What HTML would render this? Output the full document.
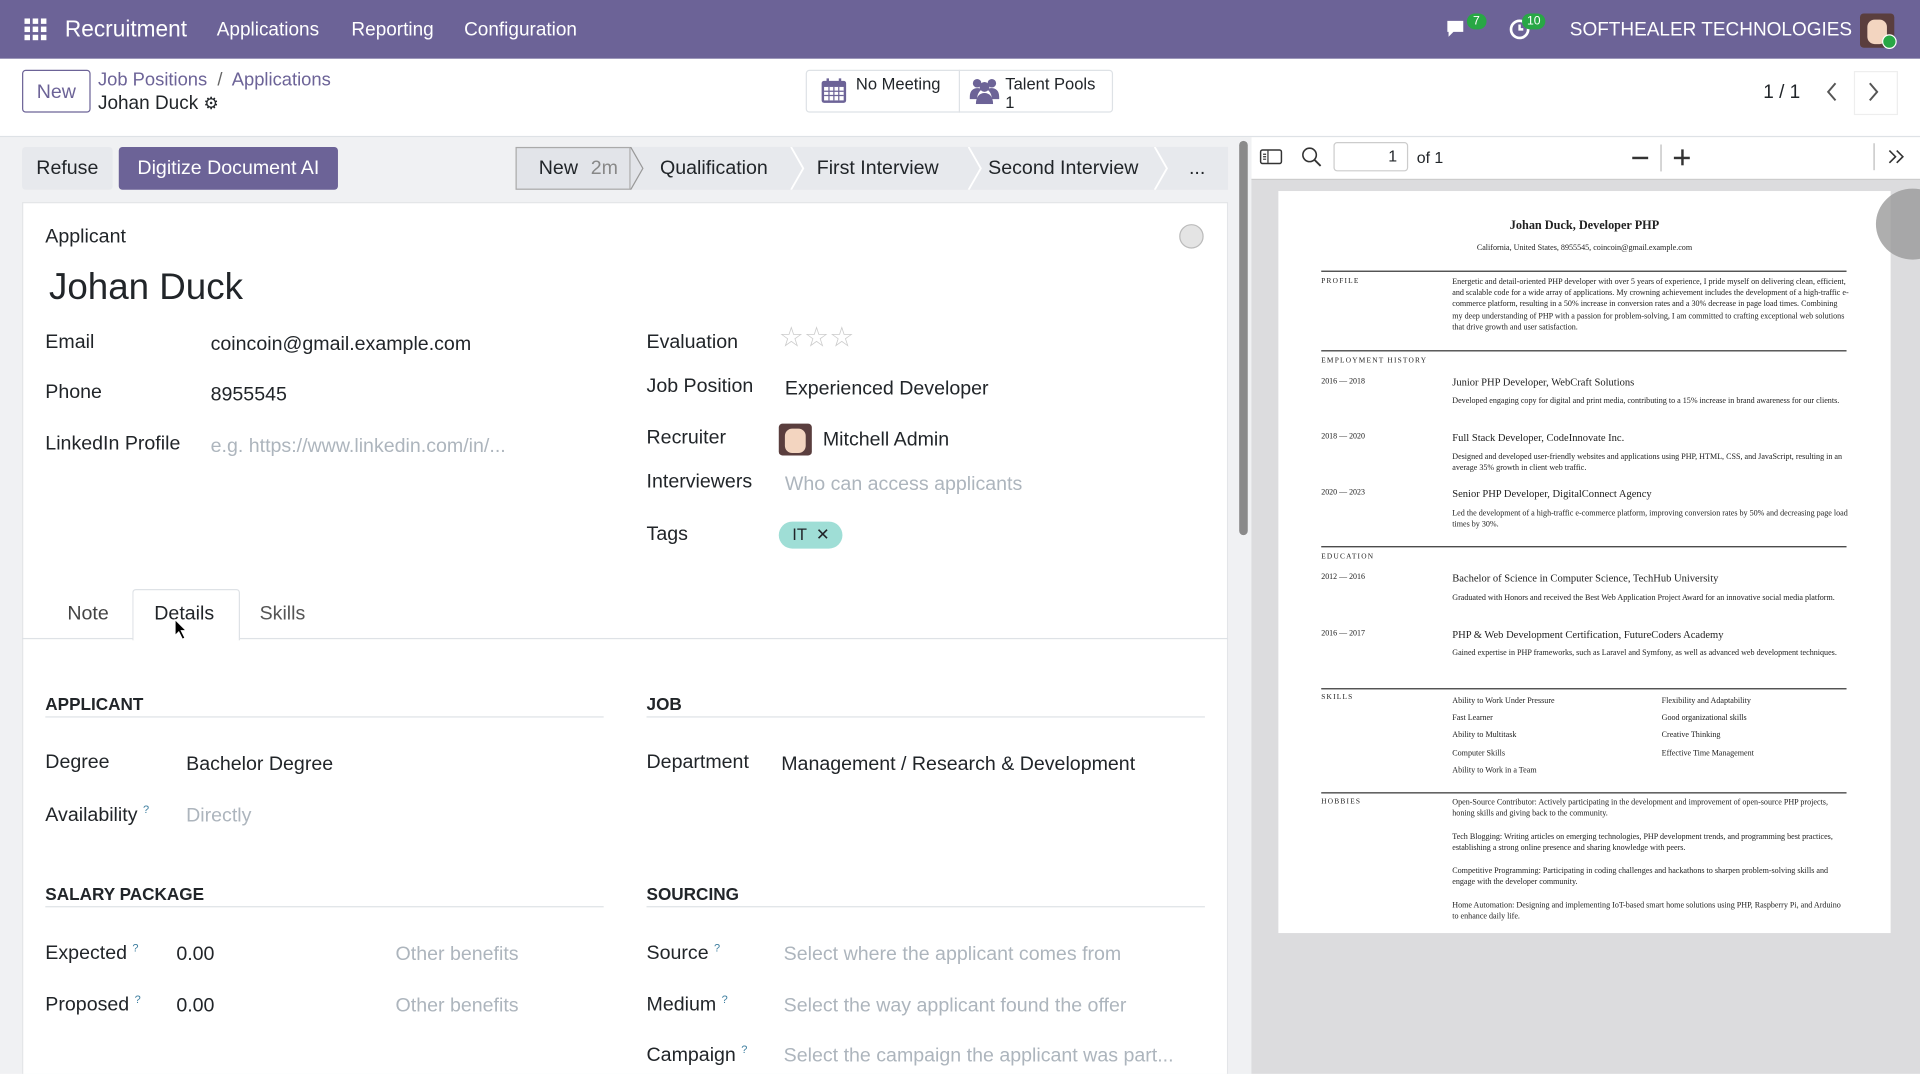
<!DOCTYPE html>
<html><head><meta charset="utf-8"><style>
html,body{margin:0;padding:0;width:1920px;height:1074px;overflow:hidden;background:#fff}
#w{position:absolute;left:0;top:0;width:1568px;height:877px;transform:scale(1.22449);transform-origin:0 0;font-family:"Liberation Sans",sans-serif;color:#212529;background:#f0f1f3;overflow:hidden}
.a{position:absolute;white-space:nowrap}
.nav{left:0;top:0;width:1568px;height:48px;background:#6c6397}
.lb{font-size:16px;color:#212529}
.val{font-size:16px;color:#212529}
.ph{font-size:16px;color:#adb5bd}
.sec{font-size:14px;font-weight:bold}
.hr{position:absolute;height:1px;background:#dee2e6}
.pdf{font-family:"Liberation Serif",serif;color:#222}
.pl{font-size:6px;letter-spacing:1px}
.pp{font-size:6.6px;line-height:9.2px;white-space:normal;width:324px}
.pt{font-size:8.6px}
.bl{position:absolute;height:1px;background:#333;left:1079px;width:429px}
sup{color:#3f7fa0;font-size:9px}
</style></head><body><div id="w">
<div class="a nav"></div>
<svg class="a" style="left:20px;top:15px" width="18" height="18" viewBox="0 0 18 18" fill="#fff"><rect x="0" y="0" width="4.5" height="4.5"/><rect x="6.7" y="0" width="4.5" height="4.5"/><rect x="13.4" y="0" width="4.5" height="4.5"/><rect x="0" y="6.7" width="4.5" height="4.5"/><rect x="6.7" y="6.7" width="4.5" height="4.5"/><rect x="13.4" y="6.7" width="4.5" height="4.5"/><rect x="0" y="13.4" width="4.5" height="4.5"/><rect x="6.7" y="13.4" width="4.5" height="4.5"/><rect x="13.4" y="13.4" width="4.5" height="4.5"/></svg>
<div class="a" style="left:53px;top:13px;color:#fff;font-size:18.5px">Recruitment</div>
<div class="a" style="left:177px;top:16px;color:#fff;font-size:15.5px">Applications</div>
<div class="a" style="left:287px;top:16px;color:#fff;font-size:15.5px">Reporting</div>
<div class="a" style="left:379px;top:16px;color:#fff;font-size:15.5px">Configuration</div>
<svg class="a" style="left:1180px;top:15px" width="20" height="18" viewBox="0 0 20 18"><path d="M2 2h13v9H7l-4 4v-4H2z" fill="#fff"/></svg>
<div class="a" style="left:1198px;top:11px;background:#28a745;color:#fff;font-size:10px;border-radius:8px;padding:1px 5px">7</div>
<svg class="a" style="left:1232px;top:15px" width="18" height="18" viewBox="0 0 18 18"><circle cx="9" cy="9" r="7" fill="none" stroke="#fff" stroke-width="2.2"/><path d="M9 5v4h3" stroke="#fff" stroke-width="2" fill="none"/></svg>
<div class="a" style="left:1243px;top:11px;background:#28a745;color:#fff;font-size:10px;border-radius:8px;padding:1px 4px">10</div>
<div class="a" style="left:1282px;top:16px;color:#fff;font-size:15.5px">SOFTHEALER TECHNOLOGIES</div>
<div class="a" style="left:1519px;top:11px;width:28px;height:28px;background:#5a3e3e;border-radius:3px"><div style="position:absolute;left:6px;top:5px;width:16px;height:20px;background:#f3d5c0;border-radius:6px"></div></div>
<div class="a" style="left:1537px;top:28px;width:10px;height:10px;background:#28a745;border-radius:50%;border:1px solid #fff"></div>
<!-- control panel -->
<div class="a" style="left:0;top:48px;width:1568px;height:63px;background:#fff;border-bottom:1px solid #dee2e6"></div>
<div class="a" style="left:18px;top:57px;width:56px;height:35px;border:1px solid #6c6397;border-radius:3px;color:#6c6397;font-size:16px;text-align:center;line-height:35px;box-sizing:border-box">New</div>
<div class="a" style="left:80px;top:57px;font-size:15px;color:#6c6397">Job Positions <span style="color:#666">&nbsp;/&nbsp;</span> Applications</div>
<div class="a" style="left:80px;top:76px;font-size:15.5px">Johan Duck <span style="font-size:14px">⚙</span></div>
<div class="a" style="left:658px;top:57px;width:251px;height:35px;border:1px solid #dee2e6;border-radius:3px;box-sizing:border-box"></div>
<div class="a" style="left:783px;top:57px;width:1px;height:35px;background:#dee2e6"></div>
<svg class="a" style="left:670px;top:63px" width="22" height="22" viewBox="0 0 22 22"><rect x="1" y="3" width="20" height="18" rx="2" fill="#6c6397"/><rect x="3" y="8" width="16" height="11" fill="#fff"/><path d="M3 11.5h16M3 15h16M7 8v11M11 8v11M15 8v11" stroke="#6c6397"/><rect x="5" y="1" width="2" height="4" fill="#6c6397"/><rect x="15" y="1" width="2" height="4" fill="#6c6397"/></svg>
<div class="a" style="left:699px;top:61px;font-size:13.5px">No Meeting</div>
<svg class="a" style="left:791px;top:63px" width="26" height="22" viewBox="0 0 26 22" fill="#6c6397"><circle cx="7" cy="5" r="3.5"/><circle cx="19" cy="5" r="3.5"/><circle cx="13" cy="8" r="4"/><path d="M1 16c0-5 3-7 6-7s4 1 4 1-4 2-4 8H1zM25 16c0-5-3-7-6-7s-4 1-4 1 4 2 4 8h6z"/><path d="M6 22c0-6 3-9 7-9s7 3 7 9z"/></svg>
<div class="a" style="left:821px;top:61px;font-size:13.5px;line-height:15px">Talent Pools<br>1</div>
<div class="a" style="left:1440px;top:67px;font-size:15.5px">1 / 1</div>
<svg class="a" style="left:1486px;top:64px" width="20" height="22" viewBox="0 0 20 22"><path d="M13 4l-6 7 6 7" stroke="#555" stroke-width="1.6" fill="none"/></svg>
<div class="a" style="left:1514px;top:58px;width:34px;height:34px;border:1px solid #eee"></div>
<svg class="a" style="left:1520px;top:64px" width="20" height="22" viewBox="0 0 20 22"><path d="M7 4l6 7-6 7" stroke="#555" stroke-width="1.6" fill="none"/></svg>
<!-- status bar -->
<div class="a" style="left:18px;top:120px;width:74px;height:35px;background:#e7e9ed;border-radius:3px;font-size:16px;line-height:35px;text-align:center">Refuse</div>
<div class="a" style="left:97px;top:120px;width:179px;height:35px;background:#6c6397;border-radius:3px;font-size:16px;line-height:35px;text-align:center;color:#fff">Digitize Document AI</div>
<div class="a" style="left:421px;top:120px;width:582px;height:35px;background:#e7e9ed"></div>
<div class="a" style="left:421px;top:120px;width:94px;height:35px;background:#e2e4e9;border:1px solid #aaa;box-sizing:border-box"></div>
<svg class="a" style="left:421px;top:120px" width="582" height="35"><path d="M94 0l10 17.5L94 35" fill="#e2e4e9" stroke="#999"/><path d="M225 0l10 17.5L225 35M370 0l10 17.5L370 35M522 0l10 17.5L522 35" fill="none" stroke="#fff" stroke-width="1.5"/></svg>
<div class="a" style="left:440px;top:129px;font-size:16px">New <span style="color:#888;margin-left:6px">2m</span></div>
<div class="a" style="left:539px;top:129px;font-size:16px">Qualification</div>
<div class="a" style="left:667px;top:129px;font-size:16px">First Interview</div>
<div class="a" style="left:807px;top:129px;font-size:16px">Second Interview</div>
<div class="a" style="left:971px;top:129px;font-size:16px">...</div>
<!-- form card -->
<div class="a" style="left:18px;top:165px;width:985px;height:740px;background:#fff;border:1px solid #e3e5e8;box-sizing:border-box"></div>
<div class="a lb" style="left:37px;top:185px">Applicant</div>
<div class="a" style="left:963px;top:183px;width:18px;height:18px;border-radius:50%;background:#e4e4e4;border:1px solid #bbb"></div>
<div class="a" style="left:40px;top:218px;font-size:30px">Johan Duck</div>
<div class="a lb" style="left:37px;top:271px">Email</div><div class="a val" style="left:172px;top:273px">coincoin@gmail.example.com</div>
<div class="a lb" style="left:37px;top:312px">Phone</div><div class="a val" style="left:172px;top:314px">8955545</div>
<div class="a lb" style="left:37px;top:354px">LinkedIn Profile</div><div class="a ph" style="left:172px;top:356px">e.g. https://www.linkedin.com/in/...</div>
<div class="a lb" style="left:528px;top:271px">Evaluation</div>
<div class="a" style="left:636px;top:262px;font-size:23px;color:#ccc;letter-spacing:0px">☆☆☆</div>
<div class="a lb" style="left:528px;top:307px">Job Position</div><div class="a val" style="left:641px;top:309px">Experienced Developer</div>
<div class="a lb" style="left:528px;top:349px">Recruiter</div>
<div class="a" style="left:636px;top:346px;width:27px;height:26px;background:#5a3e3e;border-radius:3px"><div style="position:absolute;left:5px;top:4px;width:17px;height:20px;background:#f3d5c0;border-radius:6px"></div></div>
<div class="a val" style="left:672px;top:351px">Mitchell Admin</div>
<div class="a lb" style="left:528px;top:385px">Interviewers</div><div class="a ph" style="left:641px;top:387px">Who can access applicants</div>
<div class="a lb" style="left:528px;top:428px">Tags</div>
<div class="a" style="left:636px;top:426px;width:52px;height:22px;background:#9fded6;border-radius:11px;font-size:13.5px;line-height:22px;text-indent:11px">IT &nbsp;✕</div>
<!-- tabs -->
<div class="hr" style="left:18px;top:521px;width:985px"></div>
<div class="a" style="left:108px;top:481px;width:86px;height:41px;background:#fff;border:1px solid #dee2e6;border-bottom:none;border-radius:3px 3px 0 0"></div>
<div class="a lb" style="left:55px;top:493px;color:#444">Note</div>
<div class="a lb" style="left:126px;top:493px">Details</div>
<div class="a lb" style="left:212px;top:493px;color:#555">Skills</div>
<svg class="a" style="left:142px;top:505px" width="12" height="18"><path d="M1 1v13l3-3 3 6 2-1-3-6h4z" fill="#000" stroke="#fff" stroke-width=".8"/></svg>
<div class="a sec" style="left:37px;top:567px">APPLICANT</div><div class="hr" style="left:37px;top:585px;width:456px"></div>
<div class="a sec" style="left:528px;top:567px">JOB</div><div class="hr" style="left:528px;top:585px;width:456px"></div>
<div class="a lb" style="left:37px;top:614px">Degree</div><div class="a val" style="left:152px;top:616px">Bachelor Degree</div>
<div class="a lb" style="left:37px;top:656px">Availability <sup>?</sup></div><div class="a ph" style="left:152px;top:658px">Directly</div>
<div class="a lb" style="left:528px;top:614px">Department</div><div class="a val" style="left:638px;top:616px">Management / Research &amp; Development</div>
<div class="a sec" style="left:37px;top:722px">SALARY PACKAGE</div><div class="hr" style="left:37px;top:740px;width:456px"></div>
<div class="a sec" style="left:528px;top:722px">SOURCING</div><div class="hr" style="left:528px;top:740px;width:456px"></div>
<div class="a lb" style="left:37px;top:769px">Expected <sup>?</sup></div><div class="a val" style="left:144px;top:771px">0.00</div><div class="a ph" style="left:323px;top:771px">Other benefits</div>
<div class="a lb" style="left:37px;top:811px">Proposed <sup>?</sup></div><div class="a val" style="left:144px;top:813px">0.00</div><div class="a ph" style="left:323px;top:813px">Other benefits</div>
<div class="a lb" style="left:528px;top:769px">Source <sup>?</sup></div><div class="a ph" style="left:640px;top:771px">Select where the applicant comes from</div>
<div class="a lb" style="left:528px;top:811px">Medium <sup>?</sup></div><div class="a ph" style="left:640px;top:813px">Select the way applicant found the offer</div>
<div class="a lb" style="left:528px;top:852px">Campaign <sup>?</sup></div><div class="a ph" style="left:640px;top:854px">Select the campaign the applicant was part...</div>
<!-- scrollbar -->
<div class="a" style="left:1003px;top:112px;width:19px;height:765px;background:#f0f1f3"></div>
<div class="a" style="left:1012px;top:115px;width:7px;height:322px;background:#8a8a8a;border-radius:4px"></div>
<!-- pdf viewer -->
<div class="a" style="left:1022px;top:112px;width:546px;height:765px;background:#dcdcde"></div>
<div class="a" style="left:1022px;top:112px;width:546px;height:34px;background:#fff;border-bottom:1px solid #ccc"></div>
<svg class="a" style="left:1028px;top:120px" width="20" height="16"><rect x="1.5" y="2.5" width="17" height="11" rx="1.5" fill="none" stroke="#333" stroke-width="1.2"/><path d="M7.5 3v10M3.5 6h2.5M3.5 8h2.5M3.5 10h2.5" stroke="#333"/></svg>
<svg class="a" style="left:1062px;top:119px" width="18" height="18"><circle cx="7.5" cy="7.5" r="5.5" fill="none" stroke="#333" stroke-width="1.3"/><path d="M11.5 11.5l5 5" stroke="#333" stroke-width="1.5"/></svg>
<div class="a" style="left:1089px;top:116px;width:61px;height:24px;border:1px solid #ccc;border-radius:3px;box-sizing:border-box;font-size:13px;text-align:right;padding-right:8px;line-height:22px">1</div>
<div class="a" style="left:1157px;top:121px;font-size:13px">of 1</div>
<div class="a" style="left:1333px;top:128px;width:13px;height:1.5px;background:#333"></div>
<div class="a" style="left:1356px;top:118px;width:1px;height:22px;background:#bbb"></div>
<div class="a" style="left:1367px;top:128px;width:13px;height:1.5px;background:#333"></div><div class="a" style="left:1373px;top:122px;width:1.5px;height:13px;background:#333"></div>
<div class="a" style="left:1530px;top:117px;width:1px;height:22px;background:#bbb"></div>
<svg class="a" style="left:1541px;top:121px" width="16" height="14"><path d="M2 2l5 5-5 5M8 2l5 5-5 5" stroke="#333" stroke-width="1.3" fill="none"/></svg>
<div class="a" style="left:1044px;top:156px;width:500px;height:606px;background:#fff"></div>
<div class="a" style="left:1532px;top:154px;width:60px;height:58px;border-radius:50%;background:#9a9a9a;opacity:.8"></div>
<div class="pdf">
<div class="a" style="left:1044px;top:179px;width:500px;text-align:center;font-size:10px;font-weight:bold">Johan Duck, Developer PHP</div>
<div class="a" style="left:1044px;top:199px;width:500px;text-align:center;font-size:6.6px">California, United States, 8955545, coincoin@gmail.example.com</div>
<div class="bl" style="top:221px"></div>
<div class="a pl" style="left:1079px;top:227px">PROFILE</div>
<div class="a pp" style="left:1186px;top:226px">Energetic and detail-oriented PHP developer with over 5 years of experience, I pride myself on delivering clean, efficient, and scalable code for a wide array of applications. My crowning achievement includes the development of a high-traffic e-commerce platform, resulting in a 50% increase in conversion rates and a 30% decrease in page load times. Combining my deep understanding of PHP with a passion for problem-solving, I am committed to crafting exceptional web solutions that drive growth and user satisfaction.</div>
<div class="bl" style="top:286px"></div>
<div class="a pl" style="left:1079px;top:292px">EMPLOYMENT HISTORY</div>
<div class="a" style="left:1079px;top:308px;font-size:6.5px">2016 — 2018</div><div class="a pt" style="left:1186px;top:307px">Junior PHP Developer, WebCraft Solutions</div>
<div class="a pp" style="left:1186px;top:323px">Developed engaging copy for digital and print media, contributing to a 15% increase in brand awareness for our clients.</div>
<div class="a" style="left:1079px;top:353px;font-size:6.5px">2018 — 2020</div><div class="a pt" style="left:1186px;top:352px">Full Stack Developer, CodeInnovate Inc.</div>
<div class="a pp" style="left:1186px;top:369px">Designed and developed user-friendly websites and applications using PHP, HTML, CSS, and JavaScript, resulting in an average 35% growth in client web traffic.</div>
<div class="a" style="left:1079px;top:399px;font-size:6.5px">2020 — 2023</div><div class="a pt" style="left:1186px;top:398px">Senior PHP Developer, DigitalConnect Agency</div>
<div class="a pp" style="left:1186px;top:415px">Led the development of a high-traffic e-commerce platform, improving conversion rates by 50% and decreasing page load times by 30%.</div>
<div class="bl" style="top:446px"></div>
<div class="a pl" style="left:1079px;top:452px">EDUCATION</div>
<div class="a" style="left:1079px;top:468px;font-size:6.5px">2012 — 2016</div><div class="a pt" style="left:1186px;top:467px">Bachelor of Science in Computer Science, TechHub University</div>
<div class="a pp" style="left:1186px;top:484px">Graduated with Honors and received the Best Web Application Project Award for an innovative social media platform.</div>
<div class="a" style="left:1079px;top:514px;font-size:6.5px">2016 — 2017</div><div class="a pt" style="left:1186px;top:513px">PHP &amp; Web Development Certification, FutureCoders Academy</div>
<div class="a pp" style="left:1186px;top:529px">Gained expertise in PHP frameworks, such as Laravel and Symfony, as well as advanced web development techniques.</div>
<div class="bl" style="top:562px"></div>
<div class="a pl" style="left:1079px;top:567px">SKILLS</div>
<div class="a" style="left:1186px;top:566px;font-size:6.6px;line-height:14.2px">Ability to Work Under Pressure<br>Fast Learner<br>Ability to Multitask<br>Computer Skills<br>Ability to Work in a Team</div>
<div class="a" style="left:1357px;top:566px;font-size:6.6px;line-height:14.2px">Flexibility and Adaptability<br>Good organizational skills<br>Creative Thinking<br>Effective Time Management</div>
<div class="bl" style="top:647px"></div>
<div class="a pl" style="left:1079px;top:652px">HOBBIES</div>
<div class="a pp" style="left:1186px;top:651px">Open-Source Contributor: Actively participating in the development and improvement of open-source PHP projects, honing skills and giving back to the community.</div>
<div class="a pp" style="left:1186px;top:679px">Tech Blogging: Writing articles on emerging technologies, PHP development trends, and programming best practices, establishing a strong online presence and sharing knowledge with peers.</div>
<div class="a pp" style="left:1186px;top:707px">Competitive Programming: Participating in coding challenges and hackathons to sharpen problem-solving skills and engage with the developer community.</div>
<div class="a pp" style="left:1186px;top:735px">Home Automation: Designing and implementing IoT-based smart home solutions using PHP, Raspberry Pi, and Arduino to enhance daily life.</div>
</div>
</div></body></html>
